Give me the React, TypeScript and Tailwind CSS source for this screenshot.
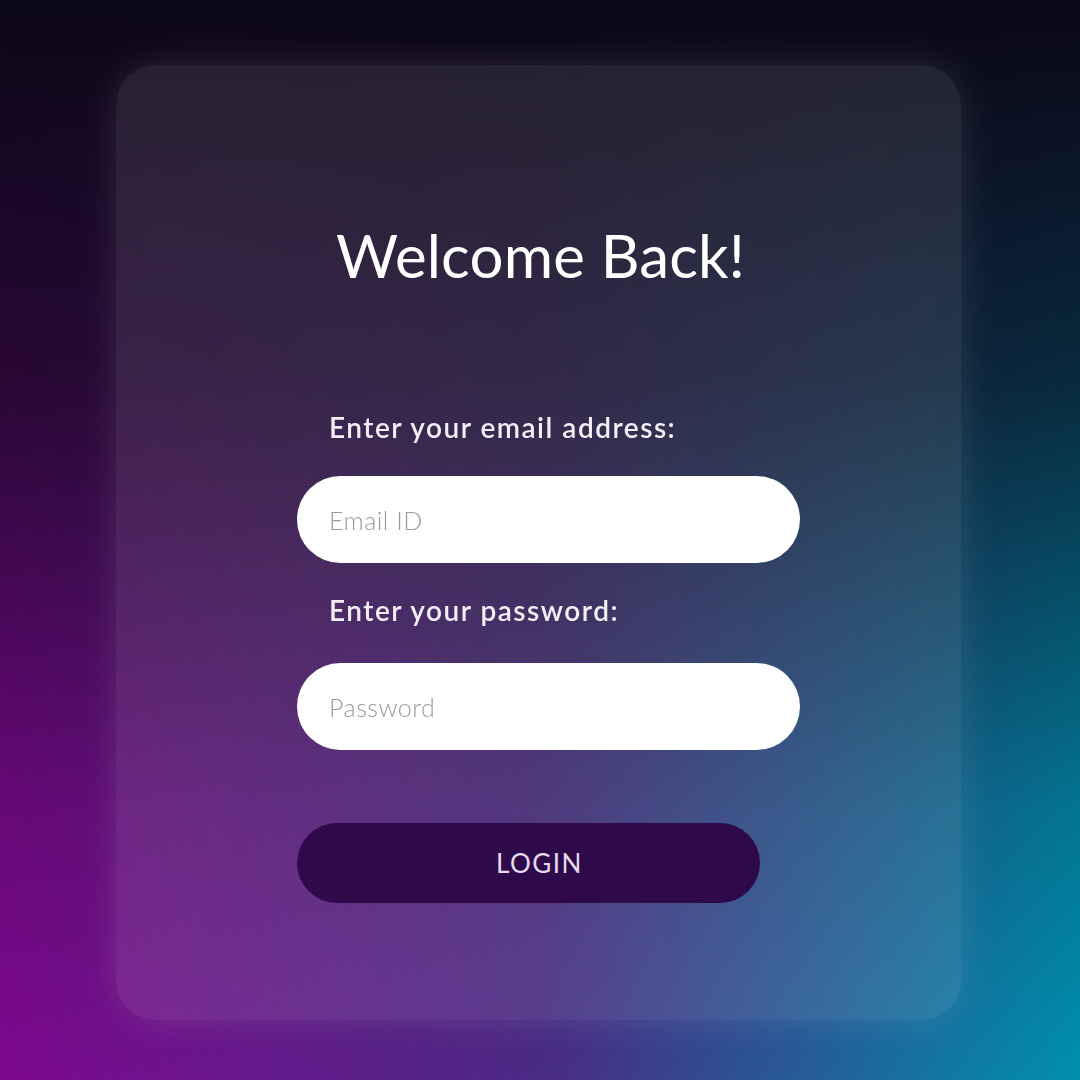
import React, { useState } from 'react';

const font = { fontFamily: 'Lato, "Open Sans", sans-serif' };

const LoginCard: React.FC = () => {
  const [email, setEmail] = useState('');
  const [password, setPassword] = useState('');

  return (
    <div className="w-[845px] h-[955px] rounded-[40px] bg-white/10 backdrop-blur-md shadow-[0_0_40px_rgba(255,255,255,0.12)] flex flex-col items-center">
      {/* Heading */}
      <h1 className="mt-[154px] h-[72px] text-[60px] leading-[72px] font-normal text-white tracking-[0.2px] pl-[4px]">
        Welcome Back!
      </h1>

      {/* Form */}
      <form
        className="mt-[119px] w-[503px] ml-[20px] flex flex-col"
        onSubmit={(e) => e.preventDefault()}
      >
        <label className="pl-[32px] h-[34px] text-[28px] leading-[34px] font-semibold tracking-[1.5px] text-[#f4eef6]">
          Enter your email address:
        </label>
        <input
          type="email"
          value={email}
          onChange={(e) => setEmail(e.target.value)}
          placeholder="Email ID"
          className="mt-[32px] h-[87px] w-full rounded-full bg-white px-[32px] text-[25px] font-light tracking-[0.5px] text-gray-700 placeholder:text-[#9b9b9b] outline-none"
          style={font}
        />
        <label className="mt-[30px] pl-[32px] h-[34px] text-[28px] leading-[34px] font-semibold tracking-[1.5px] text-[#f4eef6]">
          Enter your password:
        </label>
        <input
          type="password"
          value={password}
          onChange={(e) => setPassword(e.target.value)}
          placeholder="Password"
          className="mt-[36px] h-[87px] w-full rounded-full bg-white px-[32px] text-[25px] font-light tracking-[0.5px] text-gray-700 placeholder:text-[#9b9b9b] outline-none"
          style={font}
        />
        <button
          type="submit"
          className="mt-[73px] h-[80px] w-[463px] rounded-full bg-[#2e0a4a] pl-[22px] text-[26px] font-normal text-[#e6ddf0] tracking-[1.5px]"
          style={font}
        >
          LOGIN
        </button>
      </form>
    </div>
  );
};

export default function App() {
  return (
    <div
      className="w-[1080px] h-[1080px] overflow-hidden flex justify-center pt-[65px] pr-[3px] bg-[linear-gradient(to_bottom,#0b0716_0%,rgba(11,7,22,0.75)_35%,rgba(11,7,22,0.2)_75%,rgba(11,7,22,0)_100%),linear-gradient(to_right,#7e0890_0%,#4a2a86_50%,#0090b0_100%)]"
      style={font}
    >
      <LoginCard />
    </div>
  );
}
